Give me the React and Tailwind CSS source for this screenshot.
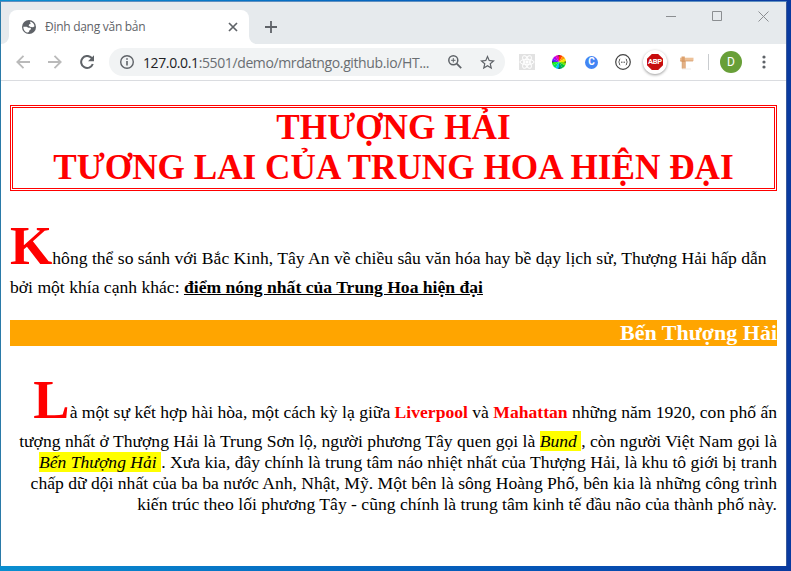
import React from "react";

const serif = "font-['Liberation_Serif','Times_New_Roman',serif]";

function Line({ className = "", children }) {
  return <div className={"whitespace-pre " + className}><span>{children}</span></div>;
}

function GlobeIcon() {
  return (
    <svg className="w-4 h-4 shrink-0" viewBox="0 0 24 24">
      <circle cx="12" cy="12" r="10.500" fill="#5f6368" />
      <path d="M3.500 11.500l5 .2 2.500 1.300 3.500.3c1 1.500.2 3-1.500 3.200l-1 2.500-1.500 1.200C6 20 3.500 16 3.500 11.500z" fill="#fff" />
      <path d="M14 3.700c3.500.8 6 3.600 6.300 7.300l-2.300 1.500-3.500-.5-3-2 .8-2 2.200-.5-.8-1.800z" fill="#fff" />
    </svg>
  );
}

function TitleBar() {
  return (
    <div className="flex h-[42px] bg-[#e6eaed] items-end">
      <div className="w-2 h-2 bg-white shrink-0"><div className="w-full h-full bg-[#e6eaed] rounded-br-lg" /></div>
      <div className="flex items-center w-[240px] h-[34px] bg-white rounded-t-lg pl-[12px] pr-[11px] shrink-0">
        <GlobeIcon />
        <span className="ml-[8px] text-[12px] tracking-[-0.28px] text-[#5f6368] whitespace-nowrap font-['Open_Sans','Noto_Sans',sans-serif]">Định dạng văn bản</span>
        <svg className="ml-auto w-[10px] h-[10px]" viewBox="0 0 10 10" stroke="#5f6368" strokeWidth="1.7"><path d="M1 1l8 8M9 1L1 9" /></svg>
      </div>
      <div className="w-2 h-2 bg-white shrink-0"><div className="w-full h-full bg-[#e6eaed] rounded-bl-lg" /></div>
      <svg className="ml-[8px] mb-[11px] w-[12px] h-[12px] shrink-0" viewBox="0 0 12 12" stroke="#5f6368" strokeWidth="1.8"><path d="M6 0v12M0 6h12" /></svg>
      <svg className="ml-auto mr-[17px] mb-[22px] w-[103px] h-[11px]" viewBox="0 0 103 11" fill="none" stroke="#8b8e91">
        <path d="M0 5.500h10" />
        <path d="M46.500 .5h9v9h-9z" />
        <path d="M92.500 .5l10 10M102.500 .5l-10 10" />
      </svg>
    </div>
  );
}

function Toolbar() {
  return (
    <div className="flex items-center h-[37px] bg-white border-b border-[#dadce0]">
      <svg className="ml-[15px] w-[14px] h-[14px] shrink-0" viewBox="0 0 14 14" fill="none" stroke="#bababa" strokeWidth="1.8"><path d="M14 7H1.500M7.500 .8L1.300 7l6.200 6.200" /></svg>
      <svg className="ml-[18px] w-[14px] h-[14px] shrink-0" viewBox="0 0 14 14" fill="none" stroke="#bababa" strokeWidth="1.8"><path d="M0 7h12.500M6.500 .8L12.700 7l-6.200 6.200" /></svg>
      <svg className="ml-[18px] w-[15px] h-[14px] shrink-0" viewBox="0 0 15 14" fill="none" stroke="#5f6368" strokeWidth="2"><path d="M12.800 9a6 6 0 1 1-1.300-6.200L13 4.500" /><path d="M14 .3v6H8z" fill="#5f6368" stroke="none" /></svg>
      <div className="flex items-center ml-[14px] w-[396px] h-7 rounded-full bg-[#f1f3f4] pl-[11px] pr-[10px] shrink-0">
        <svg className="w-[14px] h-[14px] shrink-0" viewBox="0 0 14 14" fill="none" stroke="#5f6368"><circle cx="7" cy="7" r="6.300" strokeWidth="1.400" /><path d="M7 6v4.500M7 3.300v1.500" strokeWidth="1.600" /></svg>
        <span className="ml-[9px] text-[14px] tracking-[-0.38px] text-[#202124] whitespace-nowrap font-['Open_Sans','Noto_Sans',sans-serif]">127.0.0.1<span className="text-[#6a6e72]">:5501/demo/mrdatngo.github.io/HT...</span></span>
        <svg className="ml-auto w-[14px] h-[14px] shrink-0" viewBox="0 0 14 14" fill="none" stroke="#5f6368"><circle cx="5.300" cy="5.300" r="4.500" strokeWidth="1.500" /><path d="M8.700 8.700l4.500 4.500" strokeWidth="1.800" /><path d="M5.300 3.100v4.400M3.100 5.300h4.400" strokeWidth="1" /></svg>
        <svg className="ml-[18px] w-[15px] h-[15px] shrink-0" viewBox="2 2 20 20" fill="#5f6368"><path d="M22 9.240l-7.190-.62L12 2 9.190 8.630 2 9.240l5.460 4.730L5.820 21 12 17.270 18.180 21l-1.630-7.030L22 9.240zM12 15.400l-3.760 2.270 1-4.280-3.320-2.880 4.380-.38L12 6.100l1.710 4.040 4.380.38-3.320 2.880 1 4.280L12 15.400z" /></svg>
      </div>
      <svg className="ml-[14px] w-4 h-4 shrink-0" viewBox="0 0 16 16" fill="none" stroke="#fff">
        <rect width="16" height="16" fill="#e2e2e2" stroke="none" />
        <ellipse cx="8" cy="8" rx="7" ry="2.700" /><ellipse cx="8" cy="8" rx="7" ry="2.700" transform="rotate(60 8 8)" /><ellipse cx="8" cy="8" rx="7" ry="2.700" transform="rotate(120 8 8)" /><circle cx="8" cy="8" r="1.200" fill="#fff" />
      </svg>
      <svg className="ml-[17px] w-[14px] h-[14px] shrink-0" viewBox="-7 -7 14 14">
        <path d="M0 0V-7A7 7 0 0 1 3.500-6.100z" fill="#ff3a00" /><path d="M0 0L3.500-6.100A7 7 0 0 1 6.100-3.500z" fill="#ff9a00" /><path d="M0 0L6.100-3.500A7 7 0 0 1 7 0z" fill="#f4e800" />
        <path d="M0 0H7A7 7 0 0 1 6.100 3.500z" fill="#7be000" /><path d="M0 0L6.100 3.500A7 7 0 0 1 3.500 6.100z" fill="#00c832" /><path d="M0 0L3.500 6.100A7 7 0 0 1 0 7z" fill="#00a060" />
        <path d="M0 0V7A7 7 0 0 1-3.500 6.100z" fill="#00bfff" /><path d="M0 0L-3.500 6.100A7 7 0 0 1-6.100 3.500z" fill="#00e060" /><path d="M0 0L-6.100 3.500A7 7 0 0 1-7 0z" fill="#20f020" />
        <path d="M0 0H-7A7 7 0 0 1-6.100-3.500z" fill="#5a20ff" /><path d="M0 0L-6.100-3.500A7 7 0 0 1-3.500-6.100z" fill="#b000f0" /><path d="M0 0L-3.500-6.100A7 7 0 0 1 0-7z" fill="#f000b0" />
        <path d="M0-7v1.500M0 7v-1.500M-7 0h1.500M7 0h-1.500" stroke="#333" />
      </svg>
      <div className="ml-[19px] flex items-center justify-center w-[13px] h-[13px] rounded-full bg-[#4285f4] text-white text-[10px] leading-none font-bold shrink-0 font-['Roboto',sans-serif]">C</div>
      <svg className="ml-[17px] w-4 h-4 shrink-0" viewBox="0 0 16 16" fill="none" stroke="#444"><circle cx="8" cy="8" r="7.300" strokeWidth="1.200" /><path d="M5.200 5c-1.500 0 0 2.500-1.600 3 1.600.5.1 3 1.600 3M10.800 5c1.500 0 0 2.500 1.600 3-1.600.5-.1 3-1.600 3" /><path d="M6 8.200h4" strokeDasharray="1 .5" /></svg>
      <div className="ml-[12px] flex items-center justify-center w-6 h-6 rounded-full bg-white shadow-[0_1px_3px_rgba(0,0,0,0.4)] shrink-0">
        <div className="flex items-center justify-center w-4 h-4 shrink-0 bg-[#c70d0e] [clip-path:polygon(30%_0,70%_0,100%_30%,100%_70%,70%_100%,30%_100%,0_70%,0_30%)]"><span className="text-white font-bold text-[7.5px] leading-none tracking-[-0.3px] font-['Roboto',sans-serif]">ABP</span></div>
      </div>
      <svg className="ml-[12px] w-[15px] h-[15px] shrink-0" viewBox="0 0 15 15"><path d="M3 13.500h9v1H3z" fill="#eeebe8" /><path d="M3.200 4h3.600v9.500H3.200z" fill="#e3b085" /><path d="M1 2.700h13.500v3.300H1z" fill="#edc198" /><path d="M2.500 1.500h3.300v5.500H2.500z" fill="#dda06c" /><path d="M3.200 6.500v7M1 6h13" stroke="#cf935f" strokeWidth=".7" /></svg>
      <div className="ml-[14px] w-px h-4 bg-[#c9cccf] shrink-0" />
      <div className="ml-[11px] flex items-center justify-center w-[22px] h-[22px] rounded-full bg-[#689f38] text-white text-[12px] leading-none shrink-0 font-['Roboto',sans-serif]">D</div>
      <svg className="ml-[20px] w-[4px] h-[14px] shrink-0" viewBox="0 0 4 14" fill="#5f6368"><circle cx="2" cy="2" r="1.600" /><circle cx="2" cy="7" r="1.600" /><circle cx="2" cy="12" r="1.600" /></svg>
    </div>
  );
}

function Article() {
  return (
    <main className={"w-[767px] ml-[9px] text-[17.6px] text-black " + serif}>
      <h1 className="mt-[24px] h-[86px] border-3 border-double border-[red] text-[red] text-center font-bold text-[35.2px] leading-[40px]">
        <Line>THƯỢNG HẢI</Line>
        <Line>TƯƠNG LAI CỦA TRUNG HOA HIỆN ĐẠI</Line>
      </h1>
      <section className="mt-[25px]">
        <Line className="h-[61px] leading-[60px]"><b className="text-[54.4px] text-[red]">K</b>hông thể so sánh với Bắc Kinh, Tây An về chiều sâu văn hóa hay bề dạy lịch sử, Thượng Hải hấp dẫn</Line>
        <Line className="h-[21px] leading-[21px]">bởi một khía cạnh khác: <b className="underline">điểm nóng nhất của Trung Hoa hiện đại</b></Line>
      </section>
      <h2 className="mt-[22px] h-[26px] bg-[orange] text-white text-right font-bold text-[22px] leading-[26px]"><Line>Bến Thượng Hải</Line></h2>
      <section className="mt-[24px] text-right">
        <Line className="h-[61px] leading-[60px]"><b className="text-[54.4px] text-[red]">L</b>à một sự kết hợp hài hòa, một cách kỳ lạ giữa <b className="text-[red]">Liverpool</b> và <b className="text-[red]">Mahattan</b> những năm 1920, con phố ấn</Line>
        <Line className="h-[21px] leading-[21px]">tượng nhất ở Thượng Hải là Trung Sơn lộ, người phương Tây quen gọi là <i className="bg-[yellow]">Bund </i>, còn người Việt Nam gọi là</Line>
        <Line className="h-[21px] leading-[21px]"><i className="bg-[yellow]">Bến Thượng Hải </i>. Xưa kia, đây chính là trung tâm náo nhiệt nhất của Thượng Hải, là khu tô giới bị tranh</Line>
        <Line className="h-[21px] leading-[21px]">chấp dữ dội nhất của ba ba nước Anh, Nhật, Mỹ. Một bên là sông Hoàng Phố, bên kia là những công trình</Line>
        <Line className="h-[21px] leading-[21px]">kiến trúc theo lối phương Tây - cũng chính là trung tâm kinh tế đầu não của thành phố này.</Line>
      </section>
    </main>
  );
}

export default function App() {
  return (
    <div className="w-[791px] h-[571px] overflow-hidden bg-[linear-gradient(90deg,#0a8fd0,#0670c4_35%,#0553b5_70%,#0a3a9f)] pt-px">
      <div className="w-[787px] h-[565px] bg-white border-l border-r border-t border-l-[#2a7aa8] border-r-[#3a5a9a] border-t-[#5f8fc0] overflow-hidden">
        <TitleBar />
        <Toolbar />
        <Article />
      </div>
    </div>
  );
}
